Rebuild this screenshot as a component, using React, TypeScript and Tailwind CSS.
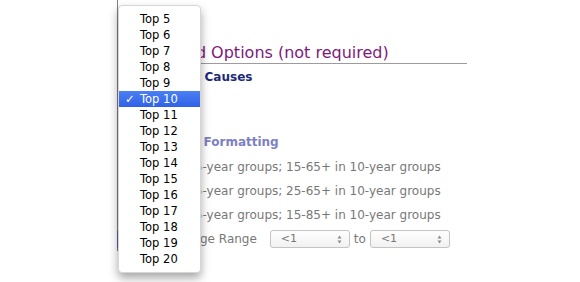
const tops = [5, 6, 7, 8, 9, 10, 11, 12, 13, 14, 15, 16, 17, 18, 19, 20];

const rows = [
  '0-14 in 5-year groups; 15-65+ in 10-year groups',
  '0-24 in 5-year groups; 25-65+ in 10-year groups',
  '0-14 in 5-year groups; 15-85+ in 10-year groups',
];

function Radio() {
  return <span className="mr-[3px] h-[13px] w-[13px] shrink-0 rounded-full border border-[#a8a8a8] bg-white" />;
}

function FakeSelect() {
  return (
    <div className="flex h-[18px] w-[80px] items-center justify-between rounded-[3px] border border-[#c4c4c4] bg-gradient-to-b from-white to-[#f1f1f1] pl-[10px] pr-[7px] text-[11px] text-[#777]">
      <span>&lt;1</span>
      <svg width="5" height="9" viewBox="0 0 5 9">
        <path d="M2.5 0.5 L4.5 3.5 L0.5 3.5 Z" fill="#8a8a8a" />
        <path d="M2.5 8.5 L4.5 5.5 L0.5 5.5 Z" fill="#8a8a8a" />
      </svg>
    </div>
  );
}

export default function App() {
  return (
    <div className="relative h-[282px] w-[580px] overflow-hidden bg-white font-['DejaVu_Sans',sans-serif]">
      {/* page behind the popup */}
      <div className="ml-[117px] w-[350px] border-l border-[#7e7e7e] pt-[42px]">
        <h2 className="border-b border-[#9c9c9c] pl-[9px] text-[16px] leading-[21px] text-[#7d1a7c]">
          Advanced Options (not required)
        </h2>
        <div className="mt-[6px] pl-[11px] text-[12px] font-bold leading-[15px] text-[#1c2a7a]">Number of Causes</div>
        <div className="mt-[50px] pl-[10px] text-[12px] font-bold leading-[15px] text-[#7c80c4]">Age Group Formatting</div>
        <div className="mt-[5px] text-[12px] text-[#787878]">
          {rows.map((r) => (
            <div key={r} className="flex h-[24px] items-center whitespace-nowrap pl-[15px]">
              <Radio />
              <span>{r}</span>
            </div>
          ))}
          <div className="flex h-[24px] items-center whitespace-nowrap pl-[8px]">
            <span className="-ml-[9px] mr-[8px] h-[17px] w-px bg-[#565d9c]" />
            <Radio />
            <span>Custom Age Range</span>
            <div className="ml-[13px]"><FakeSelect /></div>
            <span className="ml-[4px] mr-[4px]">to</span>
            <FakeSelect />
          </div>
        </div>
      </div>

      {/* open select popup */}
      <div className="absolute left-[118px] top-[5px] w-[83px] rounded-[4px] border border-[#d6d6d6] bg-white py-[5px] shadow-[0_5px_10px_rgba(0,0,0,0.35)]">
        {tops.map((n) => {
          const on = n === 10;
          return (
            <div
              key={n}
              className={
                on
                  ? 'relative h-4 bg-gradient-to-b from-[#4b7ff3] to-[#2f62e6] pl-[21px] text-[11.5px] leading-4 text-white'
                  : 'relative h-4 pl-[21px] text-[11.5px] leading-4 text-black'
              }
            >
              {on && <span className="absolute left-[6px] top-0 font-bold">✓</span>}
              Top {n}
            </div>
          );
        })}
      </div>
    </div>
  );
}
